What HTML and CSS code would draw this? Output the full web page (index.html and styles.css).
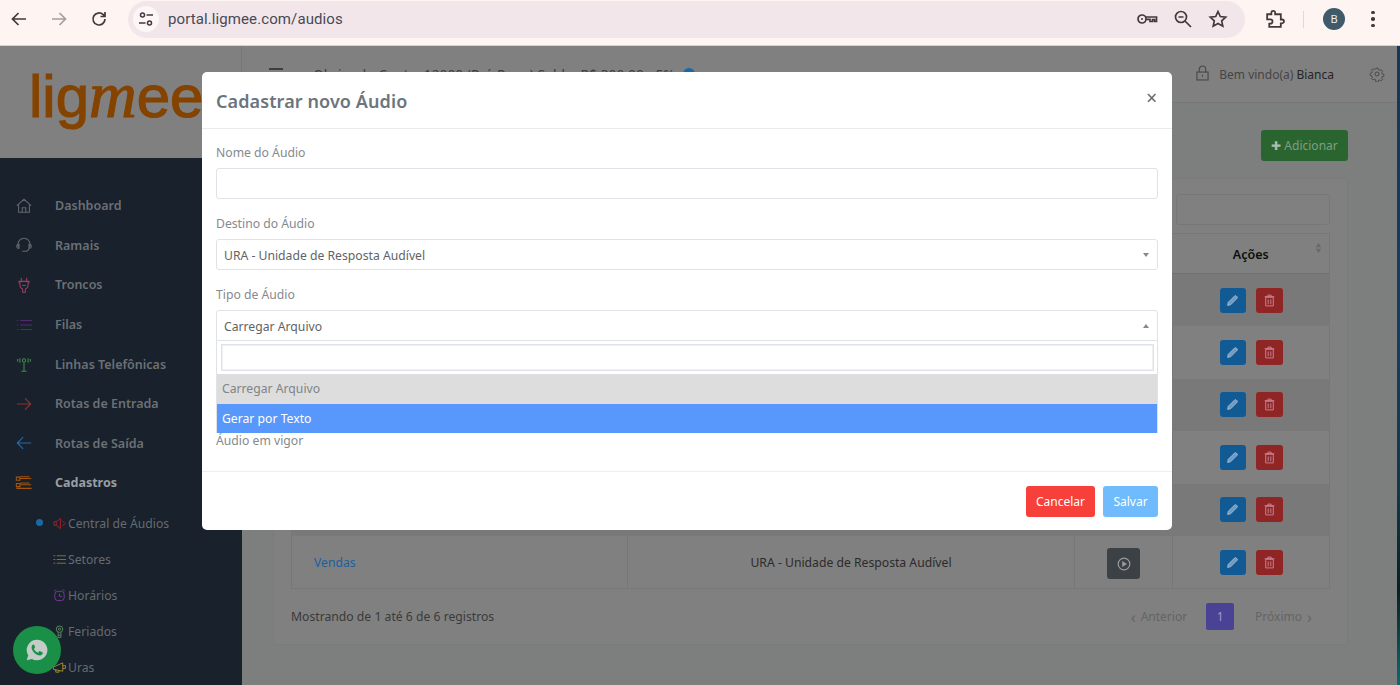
FILE: index.html
```html
<!DOCTYPE html>
<html>

<head>
    <meta charset="utf-8">
    <title>Ligmee - Central de Áudios</title>
    <link rel="stylesheet" href="styles.css">
</head>

<body>
    <!-- browser toolbar -->
    <div class="chrome">
        <svg class="tb-icon tb-back" viewBox="0 0 20 20"><path d="M17 10H4M9.500 4L3.500 10l6 6"/></svg>
        <svg class="tb-icon tb-forward" viewBox="0 0 20 20"><path d="M3 10h13M10.500 4l6 6-6 6"/></svg>
        <svg class="tb-icon tb-reload" viewBox="0 0 20 20"><path d="M16 10a6 6 0 1 1-1.800-4.300L16 7.500M16 3v4.500h-4.500"/></svg>
        <div class="omnibox">
            <div class="tune">
                <svg viewBox="0 0 20 20"><circle cx="6.500" cy="6" r="2"/><path d="M10.500 6H17M3 14h6.500"/><circle cx="13.500" cy="14" r="2"/></svg>
            </div>
            <span class="url">portal.ligmee.com/audios</span>
            <div class="omni-right">
                <svg class="tb-icon key" viewBox="0 0 22 20"><circle cx="6" cy="10" r="4"/><circle cx="6" cy="10" r="1" class="solid"/><path d="M10 8h10.500v4.500h-2v-2h-2v2h-2.500v-2.200H10"/></svg>
                <svg class="tb-icon" viewBox="0 0 20 20"><circle cx="8" cy="8" r="5.500"/><path d="M12 12l6 6M5.500 8h5"/></svg>
                <svg class="tb-icon" viewBox="0 0 20 20"><path d="M10 2.500l2.300 5 5.400.6-4 3.700 1.100 5.400L10 14.500l-4.800 2.700 1.100-5.400-4-3.700 5.400-.6z"/></svg>
            </div>
        </div>
        <svg class="tb-icon puzzle" viewBox="0 0 20 20"><path d="M3 5h4V3.500a1.800 1.800 0 0 1 3.600 0V5H16v5h1.200a1.800 1.800 0 0 1 0 3.600H16V17H5v-3h1a2 2 0 0 0 0-4.200H3z"/></svg>
        <div class="tb-sep"></div>
        <div class="avatar">B</div>
        <div class="kebab"><i></i><i></i><i></i></div>
    </div>

    <div class="page">
        <div class="sidebar">
            <div class="logo"><span>lig</span><em>m</em><span>ee</span></div>
            <ul class="menu">
                <li><svg viewBox="0 0 20 20" class="ic-gray"><path d="M2 9.500L10 2.500l8 7M4 8.500V17h12V8.500M8 17v-5h4v5"/></svg>Dashboard</li>
                <li><svg viewBox="0 0 20 20" class="ic-gray"><path d="M3.500 12V9a6.500 6.500 0 0 1 13 0v3M3.500 9.500h-.5a1.500 1.500 0 0 0-1 1.500v1a1.500 1.500 0 0 0 1.500 1.500h1v-4zM16.500 9.500h.5a1.500 1.500 0 0 1 1 1.500v1a1.500 1.500 0 0 1-1.500 1.500h-1v-4zM15.500 14c-.5 2-2.500 3-4 3H8"/></svg>Ramais</li>
                <li><svg viewBox="0 0 20 20" class="ic-pink"><path d="M7 2v4M13 2v4M4.500 6h11v1.500h-1V11a4 4 0 0 1-3 3.500v3.500h-3v-3.500a4 4 0 0 1-3-3.500V7.500h-1zM8 10.500h4"/></svg>Troncos</li>
                <li><svg viewBox="0 0 20 20" class="ic-purple"><path d="M6 5h13M6 10h13M6 15h13M2 5h1.500M2 10h1.500M2 15h1.500"/></svg>Filas</li>
                <li><svg viewBox="0 0 20 20" class="ic-green"><circle cx="10" cy="6" r="1.800"/><path d="M10 8v10M7 18h6M5.500 3.500v5M3 4.500v3M14.500 3.500v5M17 4.500v3"/></svg>Linhas Telefônicas</li>
                <li><svg viewBox="0 0 20 20" class="ic-red"><path d="M2 10h15.500M11 3.500l6.500 6.500-6.500 6.500"/></svg>Rotas de Entrada</li>
                <li><svg viewBox="0 0 20 20" class="ic-blue"><path d="M18 10H2.500M9 3.500L2.500 10 9 16.500"/></svg>Rotas de Saída</li>
                <li class="active"><svg viewBox="0 0 20 20" class="ic-orange"><path d="M1.500 3.500h4v3.500h-4zM1.500 10.500h4V14h-4zM6 5h12M6 3h10M6 12h12M6 10h10M1.500 16h17"/></svg>Cadastros</li>
            </ul>
            <ul class="submenu">
                <li class="current"><svg viewBox="0 0 14 14" class="ic-dkred"><path d="M1 5h2.500L8 1.500v11L3.500 9H1zM3.500 5v4M10 4l3 3-3 3"/></svg>Central de Áudios</li>
                <li><svg viewBox="0 0 14 14" class="ic-olive"><path d="M4 3h10M4 7h10M4 11h10M.5 3h2M.5 7h2M.5 11h2"/></svg>Setores</li>
                <li><svg viewBox="0 0 14 14" class="ic-violet"><rect x="2" y="2.500" width="10" height="10" rx="3"/><path d="M7 5v3h2.500M1.500 2L3.500.8M12.500 2L10.500.8"/></svg>Horários</li>
                <li><svg viewBox="0 0 14 14" class="ic-sage"><circle cx="7" cy="4.500" r="3.500"/><circle cx="7" cy="4.500" r="1.200"/><path d="M5.500 8v5.500h3V8M5.500 11h3"/></svg>Feriados</li>
                <li><svg viewBox="0 0 14 14" class="ic-gold"><path d="M.5 6.500l10-4.500v9l-10-2zM3 9v3h3.500V10M10.500 5h3v3h-3"/></svg>Uras</li>
            </ul>
        </div>

        <div class="main">
            <div class="topbar">
                <div class="burger"><i></i><i></i><i></i></div>
                <div class="account">Obrigado Conta: 12000 (Pré-Pago) Saldo: R$ 300,00 - 5%<span class="dot-info"></span></div>
                <svg class="lock" viewBox="0 0 14 16"><rect x="1" y="7" width="12" height="8.500"/><path d="M3.500 7V4a3.500 3.500 0 0 1 7 0v3M7 10v2"/></svg>
                <span class="welcome">Bem vindo(a) <b>Bianca</b></span>
                <svg class="gear" viewBox="0 0 20 20"><circle cx="10" cy="10" r="2.500"/><path d="M8.500 2h3l.5 2.300 1.700.8 2-1.200 2 2.200-1.200 2 .7 1.700 2.300.5v3l-2.300.5-.7 1.700 1.200 2-2 2-2-1.200-1.700.7-.5 2.300h-3L8 17.800l-1.700-.7-2 1.200-2-2 1.200-2-.7-1.700L.5 12V9l2.300-.5.7-1.700-1.200-2 2-2.200 2 1.200L8 3z" transform="translate(1 1) scale(.9)"/></svg>
            </div>

            <div class="content">
                <div class="add-row">
                    <button class="btn-add"><span class="plus">✚</span> Adicionar</button>
                </div>
                <div class="card">
                    <div class="search-row"><div class="search"></div></div>
                    <table class="grid">
                        <thead>
                            <tr>
                                <th class="c-name"></th>
                                <th class="c-dest"></th>
                                <th class="c-play"></th>
                                <th class="c-act">Ações
                                    <svg class="sort" viewBox="0 0 8 12"><path d="M4 0l3.500 5h-7zM4 12L.5 7h7z"/></svg>
                                </th>
                            </tr>
                        </thead>
                        <tbody>
                            <tr>
                                <td></td><td></td><td></td>
                                <td class="acts"><div class="acts-in"><span class="ed"><svg viewBox="0 0 12 12"><path d="M1.500 10.500l.6-2.800L8 1.800a1 1 0 0 1 1.400 0l.8.800a1 1 0 0 1 0 1.400L4.300 9.900z"/></svg></span><span class="del"><svg viewBox="0 0 12 12"><path d="M2.500 3v8h7V3zM1.500 2.500h9M4.500 2.500V1h3v1.500M4.800 5v4.500M7.200 5v4.500"/></svg></span></div></td>
                            </tr>
                            <tr>
                                <td></td><td></td><td></td>
                                <td class="acts"><div class="acts-in"><span class="ed"><svg viewBox="0 0 12 12"><path d="M1.500 10.500l.6-2.800L8 1.800a1 1 0 0 1 1.400 0l.8.800a1 1 0 0 1 0 1.400L4.300 9.900z"/></svg></span><span class="del"><svg viewBox="0 0 12 12"><path d="M2.500 3v8h7V3zM1.500 2.500h9M4.500 2.500V1h3v1.500M4.800 5v4.500M7.200 5v4.500"/></svg></span></div></td>
                            </tr>
                            <tr>
                                <td></td><td></td><td></td>
                                <td class="acts"><div class="acts-in"><span class="ed"><svg viewBox="0 0 12 12"><path d="M1.500 10.500l.6-2.800L8 1.800a1 1 0 0 1 1.400 0l.8.800a1 1 0 0 1 0 1.400L4.300 9.900z"/></svg></span><span class="del"><svg viewBox="0 0 12 12"><path d="M2.500 3v8h7V3zM1.500 2.500h9M4.500 2.500V1h3v1.500M4.800 5v4.500M7.200 5v4.500"/></svg></span></div></td>
                            </tr>
                            <tr>
                                <td></td><td></td><td></td>
                                <td class="acts"><div class="acts-in"><span class="ed"><svg viewBox="0 0 12 12"><path d="M1.500 10.500l.6-2.800L8 1.800a1 1 0 0 1 1.400 0l.8.800a1 1 0 0 1 0 1.400L4.300 9.900z"/></svg></span><span class="del"><svg viewBox="0 0 12 12"><path d="M2.500 3v8h7V3zM1.500 2.500h9M4.500 2.500V1h3v1.500M4.800 5v4.500M7.200 5v4.500"/></svg></span></div></td>
                            </tr>
                            <tr>
                                <td></td><td></td><td></td>
                                <td class="acts"><div class="acts-in"><span class="ed"><svg viewBox="0 0 12 12"><path d="M1.500 10.500l.6-2.800L8 1.800a1 1 0 0 1 1.400 0l.8.800a1 1 0 0 1 0 1.400L4.300 9.900z"/></svg></span><span class="del"><svg viewBox="0 0 12 12"><path d="M2.500 3v8h7V3zM1.500 2.500h9M4.500 2.500V1h3v1.500M4.800 5v4.500M7.200 5v4.500"/></svg></span></div></td>
                            </tr>
                            <tr>
                                <td class="name"><a>Vendas</a></td>
                                <td class="dest">URA - Unidade de Resposta Audível</td>
                                <td class="play"><span class="btn-play"><svg viewBox="0 0 14 14"><circle cx="7" cy="7" r="5.800"/><path d="M5.200 3.900L10 7l-4.800 3.100z" class="solid"/></svg></span></td>
                                <td class="acts"><div class="acts-in"><span class="ed"><svg viewBox="0 0 12 12"><path d="M1.500 10.500l.6-2.800L8 1.800a1 1 0 0 1 1.400 0l.8.800a1 1 0 0 1 0 1.400L4.300 9.900z"/></svg></span><span class="del"><svg viewBox="0 0 12 12"><path d="M2.500 3v8h7V3zM1.500 2.500h9M4.500 2.500V1h3v1.500M4.800 5v4.500M7.200 5v4.500"/></svg></span></div></td>
                            </tr>
                        </tbody>
                    </table>
                    <div class="table-foot">
                        <span class="info">Mostrando de 1 até 6 de 6 registros</span>
                        <div class="pager">
                            <span class="chev">‹</span><span>Anterior</span>
                            <span class="pg-num">1</span>
                            <span>Próximo</span><span class="chev">›</span>
                        </div>
                    </div>
                </div>
            </div>
        </div>
        <div class="desktop-edge"></div>

        <div class="whats">
            <svg viewBox="0 0 24 24"><path d="M12 2.500a9.500 9.500 0 0 0-8.100 14.400L2.500 21.500l4.800-1.300A9.500 9.500 0 1 0 12 2.500z"/><path class="phone" d="M8.600 7c-.5 0-1.600.9-1.600 2.600 0 3 3.900 7.400 7.700 7.400 1.700 0 2.600-1.300 2.600-2 0-.5-.1-.7-.4-.9l-2-1c-.4-.2-.7-.1-.9.200l-.7.900c-.2.200-.4.200-.7.100-1.400-.6-2.700-1.800-3.300-3.100-.1-.3 0-.5.200-.7l.6-.7c.2-.3.200-.5.100-.8l-.9-1.900C9 7.100 8.900 7 8.600 7z"/></svg>
        </div>

        <!-- modal -->
        <div class="modal">
            <div class="modal-head">
                <h4>Cadastrar novo Áudio</h4>
                <span class="close">×</span>
            </div>
            <div class="modal-body">
                <label>Nome do Áudio</label>
                <div class="field"></div>
                <label>Destino do Áudio</label>
                <div class="field select">URA - Unidade de Resposta Audível<i class="caret down"></i></div>
                <label>Tipo de Áudio</label>
                <div class="select-wrap">
                    <div class="field select open">Carregar Arquivo<i class="caret up"></i></div>
                    <div class="dropdown">
                        <div class="dd-search"><div class="dd-input"></div></div>
                        <div class="opt selected">Carregar Arquivo</div>
                        <div class="opt hover">Gerar por Texto</div>
                    </div>
                </div>
                <label class="under">Áudio em vigor</label>
            </div>
            <div class="modal-foot">
                <button class="btn-cancel">Cancelar</button>
                <button class="btn-save">Salvar</button>
            </div>
        </div>
    </div>
</body>

</html>
```

FILE: styles.css
```css
* {
    box-sizing: border-box;
}

body {
    margin: 0;
    height: 685px;
    overflow: hidden;
    font-family: "Noto Sans", "Open Sans", sans-serif;
    font-size: 12.200px;
}

svg {
    fill: none;
    stroke: currentColor;
    stroke-width: 1.5;
}

/* browser toolbar */
.chrome {
    display: flex;
    align-items: center;
    height: 46px;
    padding: 0 0 7px 9px;
    background-color: #fef4f1;
    border-bottom: 1px solid #d8d0ce;
    color: #45383b;
}

.tb-icon {
    width: 20px;
    height: 20px;
    stroke-width: 1.7;
    flex: none;
}

.tb-forward {
    margin-left: 20px;
    color: #a79c9c;
}

.tb-reload {
    margin: 0 19px 0 20px;
}

.omnibox {
    display: flex;
    align-items: center;
    width: 1117px;
    height: 37px;
    background-color: #f3e6ea;
    border-radius: 19px;
    padding: 0 17px 0 5px;
}

.tune {
    width: 26px;
    height: 26px;
    border-radius: 50%;
    background-color: #fdf6f6;
    display: flex;
    align-items: center;
    justify-content: center;
}

.tune svg {
    width: 20px;
    height: 20px;
}

.url {
    margin-left: 9px;
    font-family: Roboto, sans-serif;
    font-size: 15px;
    color: #474a55;
    letter-spacing: .1px;
}

.omni-right {
    margin-left: auto;
    display: flex;
    align-items: center;
    gap: 15px;
}

.key {
    width: 22px;
}

.solid {
    fill: currentColor;
    stroke: none;
}

.puzzle {
    margin-left: 19px;
    width: 21px;
    height: 21px;
}

.tb-sep {
    width: 1px;
    height: 17px;
    margin-left: 18px;
    background-color: #f4cfd3;
}

.avatar {
    width: 22px;
    height: 22px;
    margin-left: 19px;
    border-radius: 50%;
    background-color: #3f5a69;
    color: #eee;
    font-size: 11px;
    line-height: 22px;
    text-align: center;
}

.kebab {
    margin-left: 26px;
    display: flex;
    flex-direction: column;
    gap: 3px;
}

.kebab i {
    width: 3.500px;
    height: 3.500px;
    border-radius: 50%;
    background-color: #45383b;
}

/* page, painted with the colours it has under the modal backdrop */
.page {
    position: relative;
    display: flex;
    height: 639px;
    overflow: hidden;
    background-color: #7d7e7e;
}

.sidebar {
    width: 242px;
    flex: none;
    background-color: #18212c;
    color: #6c7075;
}

.logo {
    height: 112px;
    padding: 14px 0 0 29px;
    background-color: #808080;
    border-right: 1px solid #777;
    font-family: "Liberation Sans", sans-serif;
    font-size: 60px;
    line-height: 70px;
    -webkit-text-stroke: 1.200px #854300;
    color: #854300;
    white-space: nowrap;
    overflow: hidden;
}

.logo em {
    font-family: "Liberation Serif", serif;
    font-size: 66px;
}

.menu {
    list-style: none;
    margin: 28px 0 0;
    padding: 0;
}

.menu li {
    display: flex;
    align-items: center;
    height: 39.600px;
    padding-left: 15px;
    font-size: 12.500px;
    font-weight: 600;
}

.menu svg {
    width: 18px;
    height: 18px;
    margin-right: 22px;
    stroke-width: 1.200;
}

.menu .active {
    color: #9a9ea3;
    font-weight: 700;
}

.submenu {
    list-style: none;
    margin: 2.500px 0 0;
    padding: 0;
}

.submenu li {
    display: flex;
    align-items: center;
    height: 36px;
    padding-left: 53px;
    color: #666b70;
    position: relative;
}

.submenu svg {
    width: 13px;
    height: 13px;
    margin-right: 2px;
    stroke-width: 1;
}

.submenu .current::before {
    content: "";
    position: absolute;
    left: 36px;
    top: 14px;
    width: 7px;
    height: 7px;
    border-radius: 50%;
    background-color: #1769aa;
}

.ic-gray { color: #63676b; }
.ic-pink { color: #a03d60; }
.ic-purple { color: #552a72; }
.ic-green { color: #3f8a4a; }
.ic-red { color: #8c3236; }
.ic-blue { color: #246ca6; }
.ic-orange { color: #a4540e; }
.ic-dkred { color: #a92020; }
.ic-olive { color: #8a7a26; }
.ic-violet { color: #7d3a9c; }
.ic-sage { color: #5f8a62; }
.ic-gold { color: #a99030; }

.main {
    flex: 1;
    min-width: 0;
    display: flex;
    flex-direction: column;
}

.topbar {
    display: flex;
    align-items: center;
    height: 57px;
    padding: 0 12px 0 27px;
    background-color: #808080;
    border-bottom: 1px solid #777;
    color: #3d3d3d;
}

.burger {
    display: flex;
    flex-direction: column;
    gap: 3px;
    width: 14px;
}

.burger i {
    height: 2px;
    background-color: #3d3d3d;
}

.account {
    margin-left: 30px;
    font-size: 13.800px;
    display: flex;
    align-items: center;
}

.dot-info {
    width: 12px;
    height: 12px;
    margin-left: 8px;
    border-radius: 50%;
    background-color: #1769aa;
}

.lock {
    width: 13px;
    height: 16px;
    margin: -3px -2px 0 auto;
    stroke-width: 1.200;
    color: #474747;
}

.welcome {
    margin-left: 12px;
    font-size: 12px;
    color: #454545;
}

.welcome b {
    font-weight: 400;
    color: #262626;
}

.gear {
    width: 16px;
    height: 16px;
    margin-left: 35px;
    stroke-width: 1.100;
    color: #404040;
}

.content {
    flex: 1;
    padding: 27px 49px 0 31px;
}

.add-row {
    display: flex;
    justify-content: flex-end;
    margin-bottom: 17px;
}

.btn-add {
    width: 87px;
    height: 31px;
    padding: 0;
    border: 0;
    border-radius: 3px;
    background-color: #2a6530;
    color: #7f9f83;
    font-family: inherit;
    font-size: 12px;
}

.plus {
    color: #a9bdab;
}

.card {
    height: 467px;
    padding: 15px 17px;
    background-color: #808080;
    border: 1px solid #7b7b7b;
    border-radius: 3px;
}

.search-row {
    display: flex;
    justify-content: flex-end;
    margin-bottom: 8px;
}

.search {
    width: 154px;
    height: 31px;
    border: 1px solid #777;
    border-radius: 3px;
}

.grid {
    width: 100%;
    table-layout: fixed;
    border-collapse: collapse;
    border: 1px solid #777;
}

.grid th {
    height: 40px;
    padding-bottom: 0;
    color: #0d0d0d;
    font-size: 12.500px;
    font-weight: 600;
    border-bottom: 1px solid #6f6f6f;
    position: relative;
}

.c-name { width: 336px; }
.c-dest { width: 447px; }
.c-play { width: 98px; }

.sort {
    position: absolute;
    top: 9px;
    right: 7px;
    width: 7px;
    height: 10px;
    fill: #6a6a6a;
    stroke: none;
}

.grid td {
    height: 52.500px;
    border-left: 1px solid #777;
    padding: 0;
}

.grid td:first-child {
    border-left: 0;
}

.grid tbody tr:nth-child(odd) {
    background-color: #797979;
}

.grid tbody tr:nth-child(odd) td {
    border-left-color: transparent;
}

.name {
    padding-left: 22px !important;
}

.name a {
    color: #1c5f9e;
}

.dest {
    text-align: center;
    color: #2b2b2b;
}

.play {
    text-align: center;
}

.btn-play {
    display: inline-flex;
    align-items: center;
    justify-content: center;
    width: 33px;
    height: 31px;
    margin-top: 3px;
    border-radius: 3px;
    background-color: #3c4146;
    color: #9a9a9a;
}

.btn-play svg {
    width: 14px;
    height: 14px;
    stroke-width: 1.200;
}

.acts-in {
    display: flex;
    justify-content: center;
    gap: 10px;
}

.acts-in span {
    display: flex;
    align-items: center;
    justify-content: center;
    height: 25px;
    border-radius: 3px;
}

.acts-in svg {
    width: 13px;
    height: 13px;
    stroke-width: .8;
}

.ed {
    width: 26px;
    background-color: #125a94;
    color: #a4bfd8;
}

.ed svg {
    fill: #6f9cc4;
}

.del {
    width: 27px;
    background-color: #902525;
    color: #cf8c9c;
}

.table-foot {
    display: flex;
    align-items: center;
    justify-content: space-between;
    margin-top: 14px;
    color: #3a3a3a;
}

.pager {
    display: flex;
    align-items: center;
    gap: 5px;
    padding-right: 18px;
    color: #646464;
    font-size: 12px;
}

.chev {
    font-size: 16px;
}

.pg-num {
    width: 28px;
    height: 27px;
    margin: 0 16px 0 14px;
    background-color: #4a4294;
    border-radius: 2px;
    color: #9d9ad0;
    text-align: center;
    line-height: 27px;
}

.desktop-edge {
    width: 3px;
    flex: none;
    background: linear-gradient(#15375a, #123f66 45%, #0f3a4a 70%, #0a2020 85%, #0e6a6e);
}

.whats {
    position: absolute;
    left: 13px;
    top: 580px;
    width: 48px;
    height: 48px;
    border-radius: 50%;
    background-color: #1a8f47;
    display: flex;
    align-items: center;
    justify-content: center;
}

.whats svg {
    width: 26px;
    height: 26px;
    fill: #c4ccc8;
    stroke: none;
}

.whats .phone {
    fill: #1a8f47;
}

/* modal */
.modal {
    position: absolute;
    left: 202px;
    top: 26px;
    width: 970px;
    height: 458px;
    display: flex;
    flex-direction: column;
    background-color: #fff;
    border-radius: 5px;
}

.modal-head {
    display: flex;
    justify-content: space-between;
    height: 57px;
    padding: 17px 14px 0;
    border-bottom: 1px solid #eaeaea;
}

.modal-head h4 {
    margin: 0;
    font-size: 18px;
    font-weight: 600;
    line-height: 25px;
    letter-spacing: .1px;
    color: #6c757d;
}

.close {
    font-size: 19px;
    line-height: 16px;
    margin: 1px 1px 0 0;
    color: #666;
}

.modal-body {
    flex: 1;
    padding: 14px 14px 0;
}

.modal-body label {
    display: block;
    height: 25px;
    color: #85898d;
    line-height: 20px;
}

.field {
    height: 31px;
    margin-bottom: 15px;
    padding-left: 7px;
    border: 1px solid #dfe2e6;
    border-radius: 3px;
    line-height: 31px;
    color: #5f6367;
    position: relative;
}

.field.open {
    margin-bottom: 0;
    border-radius: 3px 3px 0 0;
}

.caret {
    position: absolute;
    right: 8px;
    top: 13px;
    border-left: 3px solid transparent;
    border-right: 3px solid transparent;
}

.caret.down {
    border-top: 4px solid #888;
}

.caret.up {
    border-bottom: 4px solid #888;
}

.select-wrap {
    position: relative;
}

.dropdown {
    position: absolute;
    left: 0;
    right: 0;
    top: 31px;
    height: 92px;
    background-color: #fff;
    border: 1px solid #dfe2e6;
    border-top: 0;
    z-index: 2;
}

.dd-search {
    height: 33px;
    padding: 3px 3px 2px 3px;
}

.dd-input {
    height: 27px;
    margin: 0 0 0 1px;
    border: 1px solid #dfe2e6;
    outline: 1px solid #f0f0f0;
    outline-offset: -2px;
}

.opt {
    height: 29.500px;
    padding-left: 5px;
    line-height: 29px;
}

.opt.selected {
    background-color: #ddd;
    color: #808488;
    line-height: 30px;
}

.opt.hover {
    background-color: #5897fb;
    color: #fff;
}

.modal-body .under {
    margin-top: 90px;
}

.modal-foot {
    display: flex;
    justify-content: flex-end;
    gap: 8px;
    height: 59px;
    padding: 14px 14px 0;
    border-top: 1px solid #eee;
}

.modal-foot button {
    height: 31px;
    padding: 0;
    border: 0;
    border-radius: 3px;
    color: #fff;
    font-family: inherit;
    font-size: 12px;
}

.btn-cancel {
    width: 69px;
    background-color: #f8403a;
}

.btn-save {
    width: 55px;
    background-color: #6fbbfb;
}
```
